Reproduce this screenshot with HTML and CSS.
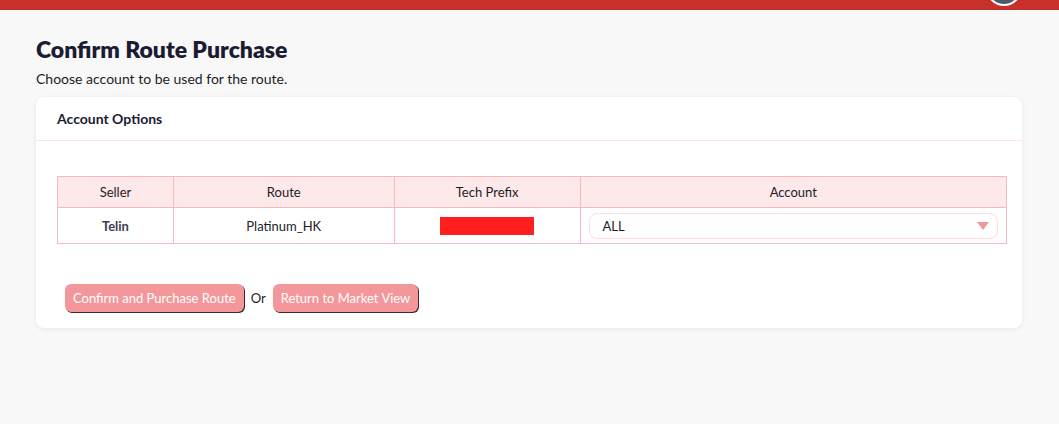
FILE: index.html
```html
<!DOCTYPE html>
<html>
<head>
<meta charset="utf-8">
<link rel="stylesheet" href="styles.css">
</head>
<body>
<header class="topbar">
  <div class="avatar"></div>
</header>
<main class="page">
  <h1 class="title">Confirm Route Purchase</h1>
  <p class="subtitle">Choose account to be used for the route.</p>
  <section class="card">
    <div class="card-header">Account Options</div>
    <div class="card-body">
      <table class="grid">
        <colgroup>
          <col class="c1"><col class="c2"><col class="c3"><col class="c4">
        </colgroup>
        <thead>
          <tr><th>Seller</th><th>Route</th><th>Tech Prefix</th><th>Account</th></tr>
        </thead>
        <tbody>
          <tr>
            <td class="seller">Telin</td>
            <td>Platinum_HK</td>
            <td><span class="redact"></span></td>
            <td class="acct">
              <div class="select"><span>ALL</span><span class="caret"></span></div>
            </td>
          </tr>
        </tbody>
      </table>
      <div class="actions">
        <button class="btn">Confirm and Purchase Route</button>
        <span class="or">Or</span>
        <button class="btn">Return to Market View</button>
      </div>
    </div>
  </section>
</main>
</body>
</html>
```

FILE: styles.css
```css
html, body { margin: 0; padding: 0; }
body {
  background: #f8f8f8;
  font-family: Lato, "Open Sans", sans-serif;
  color: #1c1c2e;
  overflow: hidden;
  height: 424px;
}
.topbar {
  height: 10px;
  background: #c8302c;
  position: relative;
}
.avatar {
  position: absolute;
  left: 986px;
  top: -30px;
  width: 32px;
  height: 32px;
  border-radius: 50%;
  background: #4d5d68;
  border: 2px solid #ffffff;
}
.page {
  padding: 25px 37px 0 36px;
}
.title {
  margin: 0;
  font-size: 23px;
  font-weight: 800;
  color: #1b1b33;
  line-height: 28px;
}
.subtitle {
  margin: 6px 0 0 0;
  font-size: 14px;
  line-height: 20px;
  color: #1c1c24;
}
.card {
  margin-top: 8px;
  background: #fff;
  border-radius: 8px;
  box-shadow: 0 1px 4px rgba(0,0,0,0.08);
}
.card-header {
  height: 43px;
  line-height: 43px;
  padding: 0 21px;
  font-size: 14px;
  font-weight: 700;
  color: #1b1b33;
  border-bottom: 1px solid #fde4e6;
}
.card-body {
  padding: 35px 15px 16px 21px;
}
.grid {
  width: 950px;
  border-collapse: collapse;
  font-size: 13px;
  color: #1c1c24;
}
.c1 { width: 116px; }
.c2 { width: 221px; }
.c3 { width: 186px; }
.c4 { width: 427px; }
.grid th, .grid td {
  border: 1px solid #f6b9bd;
  text-align: center;
}
.grid th {
  background: #fde8ea;
  font-weight: 400;
  height: 30px;
  padding: 0;
}
.grid td {
  height: 35px;
  padding: 0;
}
.seller { font-weight: 700; color: #3e3e50; }
.redact {
  display: inline-block;
  width: 94px;
  height: 18px;
  background: #ff1f1f;
  vertical-align: middle;
}
.acct { padding: 0 8px !important; text-align: left !important; }
.select {
  height: 24px;
  border: 1px solid #fcdde0;
  border-radius: 8px;
  display: flex;
  align-items: center;
  justify-content: space-between;
  padding: 0 8px 0 13px;
  font-size: 13px;
}
.caret {
  width: 0;
  height: 0;
  border-left: 6px solid transparent;
  border-right: 6px solid transparent;
  border-top: 8px solid #f3969b;
}
.actions {
  margin-top: 40px;
  display: flex;
  align-items: center;
  gap: 7px;
  padding-left: 8px;
}
.btn {
  font-family: inherit;
  font-size: 13px;
  color: #fff;
  background: #f4979b;
  border: none;
  border-radius: 6px;
  height: 28px;
  padding: 0 8px;
  box-shadow: 1px 1px 0 #3a2a2a;
}
.or { font-size: 13px; color: #1c1c24; }
```
